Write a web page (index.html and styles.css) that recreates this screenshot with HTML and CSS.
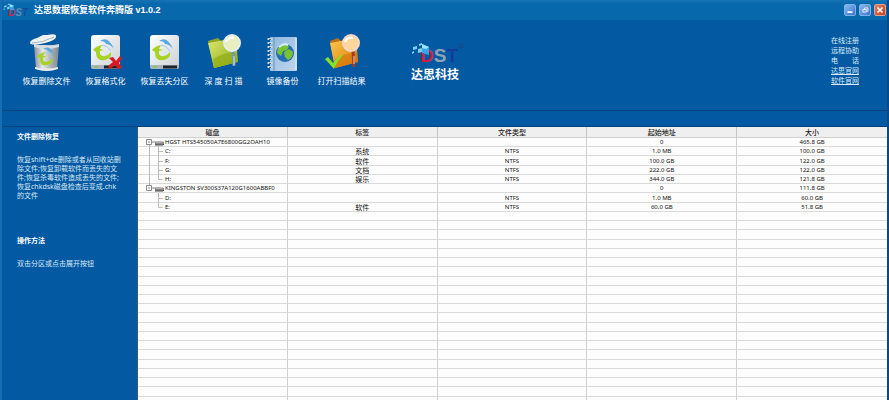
FILE: index.html
```
<!DOCTYPE html>
<html lang="zh-CN">
<head>
<meta charset="utf-8">
<title>达思数据恢复软件奔腾版 v1.0.2</title>
<link rel="stylesheet" href="styles.css">
</head>
<body>
<svg class="defs" aria-hidden="true">
  <defs>
    <linearGradient id="paper" x2="1" y2="1"><stop stop-color="#fff"/><stop offset="1" stop-color="#c9d0d4"/></linearGradient>
    <linearGradient id="metal"><stop stop-color="#878f94"/><stop offset=".35" stop-color="#e4e8e8"/><stop offset=".7" stop-color="#a9b0b3"/><stop offset="1" stop-color="#7f898f"/></linearGradient>
    <linearGradient id="green" x2="1" y2="1"><stop stop-color="#dce870"/><stop offset="1" stop-color="#8fab17"/></linearGradient>
    <linearGradient id="orange" x2="1" y2="1"><stop stop-color="#ffc850"/><stop offset="1" stop-color="#d47b09"/></linearGradient>
    <linearGradient id="book" x2="1" y2="1"><stop stop-color="#8db9df"/><stop offset="1" stop-color="#c0d5ee"/></linearGradient>
    <g id="arrows">
      <path d="M12 7q8-6 14 8-4-5-8-5-1-3-6-3z" fill="#5aa8e0"/>
      <path d="M14 11q5 0 9 6" fill="none" stroke="#9accf0"/>
      <path d="M5 16q3-4 9-5l-2 4 4 1-4 1q-1 6 5 5 4-1 6-4 1 6-6 8-9 2-9-8z" fill="#a8d224"/>
    </g>
    <g id="disk">
      <rect x="3" y="1" width="29" height="34" rx="3" fill="url(#paper)"/>
      <path d="M3 31h29v2q0 2-3 2H6q-3 0-3-2z" fill="#aab4ba"/>
      <path d="M6 33h4" stroke="#7cc33c"/>
      <path d="M16 33h14" stroke="#1d252b" stroke-width="3"/>
      <use href="#arrows"/>
    </g>
    <g id="drive">
      <path d="M18 3h5l3 1v3h-9V4z" fill="#8a8a8a"/><path d="M18 4h6" stroke="#ddd"/><path d="M17 7h8l1-1" fill="none" stroke="#444"/>
    </g>
    <g id="dst">
      <path d="M2 3l4-1v3l-4 1zM1 8l2-1v2l-2 1zM7 5l4-1v4l-4 1zM8 0l3-1v2L8 2z" fill="#83cdf5"/>
      <path d="M11 0l7 3v8l-7-2z" fill="#36a5e8"/><path d="M11 0l7 3-3 2-4-1z" fill="#9be2ff"/>
    </g>
  </defs>
</svg>

<div class="window">
  <header class="titlebar">
    <svg class="mini-logo" viewBox="0 0 27 16" role="img" aria-label="DST">
      <text x="5" y="14" class="mark-text"><tspan fill="#c82848">D</tspan><tspan fill="#5d8cb4">S</tspan><tspan fill="#1849a0">T</tspan></text>
      <use href="#dst" transform="translate(0 2) scale(.6)"/>
    </svg>
    <h1>达思数据恢复软件奔腾版 v1.0.2</h1>
    <div class="controls">
      <button type="button" aria-label="最小化"><svg viewBox="0 0 12 12"><path d="M3 8.500h6" stroke="#fff" stroke-width="2"/></svg></button>
      <button type="button" aria-label="还原"><svg viewBox="0 0 12 12" fill="none" stroke="#fff"><path d="M5.500 5V3.500h4v4H8M3.500 5.500h4v3h-4z"/></svg></button>
      <button type="button" class="close" aria-label="关闭"><svg viewBox="0 0 12 12"><path d="M3 3l6 6M9 3l-6 6" stroke="#fff" stroke-width="2"/></svg></button>
    </div>
  </header>

  <div class="toolbar">
    <nav class="tools">
      <button type="button">
        <svg viewBox="0 0 36 38">
          <path d="M5 11h25l-2 24q-10 3-21 0z" fill="url(#metal)"/>
          <path d="M5 10q12 3 25 0v3q-12 4-25 0z" fill="#d5dbde"/>
          <path d="M6 33q11 3 23 0v2q-11 4-23 0z" fill="#e9ecec"/>
          <path d="M1 9Q1 6 8 4L14 1l4 0q9-2 9 1 1 4-11 7Q2 12 1 9z" fill="#eef1f2"/>
          <path d="M3 9q10 0 22-6" fill="none" stroke="#a9b2b8"/>
          <use href="#arrows" transform="translate(4 9) scale(.85)"/>
        </svg>
        <span>恢复删除文件</span>
      </button>
      <button type="button">
        <svg viewBox="0 0 36 38"><use href="#disk"/><path d="M21 24l4-1 3 4 4-5 2 2-3 5 3 5-4 1-3-4-5 4-2-3 5-4z" fill="#da1820"/></svg>
        <span>恢复格式化</span>
      </button>
      <button type="button">
        <svg viewBox="0 0 36 38"><use href="#disk"/></svg>
        <span>恢复丢失分区</span>
      </button>
      <button type="button">
        <svg viewBox="0 0 36 38">
          <path d="M2 7l10-3 3 3 13-3 3 24L8 34z" fill="#91a620"/>
          <path d="M2 9l28-5 2 24L8 34z" fill="url(#green)"/><path d="M7 25q14-8 23-6l1 9L8 34z" fill="#92ac16" opacity=".7"/>
          <path d="M27 16l1 16" stroke="#7097b4" stroke-width="3"/><path d="M28 22v9" stroke="#dceaf3"/>
          <circle cx="26" cy="9" r="8" fill="#e9eec0" stroke="#e5eef0" stroke-width="2"/><path d="M20 8q2-5 8-4" fill="none" stroke="#fff" stroke-width="2"/>
        </svg>
        <span>深 度 扫 描</span>
      </button>
      <button type="button">
        <svg viewBox="0 0 36 38">
          <rect x="5" y="3" width="27" height="34" rx="1" fill="url(#book)"/><path d="M9 3v34" stroke="#6c91b5"/><path d="M31 4v32" stroke="#e1eefa"/>
          <path d="M5 4v32" stroke="#ccd5dc" stroke-width="5" stroke-dasharray="2 2"/><path d="M5 5v30" stroke="#536c80" stroke-width="2" stroke-dasharray="1 3"/>
          <circle cx="20" cy="19" r="9" fill="#266db4"/><path d="M13 14q5-6 11-2l-2 4-4 1-2 5-4-3zM19 18l5-3 4 3q0 6-5 8l-3-3z" fill="#79c332"/><path d="M14 13q5-4 9-2" fill="none" stroke="#d7f1ff" stroke-width="2"/>
        </svg>
        <span>镜像备份</span>
      </button>
      <button type="button">
        <svg viewBox="0 0 36 38">
          <path d="M6 7l8-3 3 3 13-3 3 24L11 34z" fill="#bd7113"/>
          <path d="M6 9l26-5 2 24L11 34z" fill="url(#orange)"/><path d="M10 26q12-8 23-7l1 9-23 6z" fill="#d57a0b" opacity=".7"/>
          <path d="M29 17l1 16" stroke="#a5392a" stroke-width="3"/><path d="M30 22v8" stroke="#ffd1bc"/>
          <circle cx="27" cy="9" r="8" fill="#ffd69a" stroke="#f5d8c9" stroke-width="2"/><path d="M21 8q2-5 8-4" fill="none" stroke="#fff" stroke-width="2"/>
          <path d="M1 25l3-2 5 6Q13 23 20 20q-7 7-10 15z" fill="#84e326"/>
        </svg>
        <span>打开扫描结果</span>
      </button>
    </nav>
    <div class="brand">
      <svg viewBox="0 0 54 24" role="img" aria-label="DST">
        <text x="9" y="20" class="brand-text"><tspan fill="#d41c40">D</tspan><tspan fill="#8da4b7">S</tspan><tspan fill="#153b9c">T</tspan></text>
        <use href="#dst" y="2"/>
        <circle cx="50" cy="4" r="2" fill="none" stroke="#17477d"/>
      </svg>
      <strong>达思科技</strong>
    </div>
    <nav class="links">
      <a href="#register">在线注册</a>
      <a href="#remote">远程协助</a>
      <a href="#phone" class="spread"><span>电</span><span>话</span></a>
      <a href="#site" class="underlined">达思官网</a>
      <a href="#software" class="underlined">软件官网</a>
    </nav>
  </div>
  <div class="strip"></div>

  <main>
    <aside>
      <h2>文件删除恢复</h2>
      <p>恢复shift+de删除或者从回收站删<br>除文件;恢复卸载软件而丢失的文<br>件;恢复杀毒软件造成丢失的文件;<br>恢复chkdsk磁盘检查后变成.chk<br>的文件</p>
      <h2>操作方法</h2>
      <p>双击分区或点击展开按钮</p>
    </aside>
    <div class="listing">
      <table>
        <thead><tr><th>磁盘</th><th>标签</th><th>文件类型</th><th>起始地址</th><th>大小</th></tr></thead>
        <tbody>
          <tr><td><div class="node"><svg viewBox="0 0 27 8"><path d="M11.500 7v3" stroke="#aaa"/><path d="M8.500 1.500h5v5h-5zM10 4h2M14 4h3" fill="none" stroke="#888"/><use href="#drive"/></svg>HGST HTS545050A7E6800GG2OAH10</div></td><td></td><td></td><td>0</td><td>465.8 GB</td></tr>
          <tr><td><div class="node"><svg viewBox="0 0 27 8"><path d="M11.500-1v11M20.500-1v11M21 4.500h4" fill="none" stroke="#bbb"/></svg>C:</div></td><td>系统</td><td>NTFS</td><td>1.0 MB</td><td>100.0 GB</td></tr>
          <tr><td><div class="node"><svg viewBox="0 0 27 8"><path d="M11.500-1v11M20.500-1v11M21 4.500h4" fill="none" stroke="#bbb"/></svg>F:</div></td><td>软件</td><td>NTFS</td><td>100.0 GB</td><td>122.0 GB</td></tr>
          <tr><td><div class="node"><svg viewBox="0 0 27 8"><path d="M11.500-1v11M20.500-1v11M21 4.500h4" fill="none" stroke="#bbb"/></svg>G:</div></td><td>文档</td><td>NTFS</td><td>222.0 GB</td><td>122.0 GB</td></tr>
          <tr><td><div class="node"><svg viewBox="0 0 27 8"><path d="M11.500-1v11M20.500-1v5.500h4" fill="none" stroke="#bbb"/></svg>H:</div></td><td>娱乐</td><td>NTFS</td><td>344.0 GB</td><td>121.8 GB</td></tr>
          <tr><td><div class="node"><svg viewBox="0 0 27 8"><path d="M11.500-1v2" stroke="#aaa"/><path d="M8.500 1.500h5v5h-5zM10 4h2M14 4h3" fill="none" stroke="#888"/><use href="#drive"/></svg>KINGSTON SV300S37A120G1600ABBF0</div></td><td></td><td></td><td>0</td><td>111.8 GB</td></tr>
          <tr><td><div class="node"><svg viewBox="0 0 27 8"><path d="M20.500-1v11M21 4.500h4" fill="none" stroke="#bbb"/></svg>D:</div></td><td></td><td>NTFS</td><td>1.0 MB</td><td>60.0 GB</td></tr>
          <tr><td><div class="node"><svg viewBox="0 0 27 8"><path d="M20.500-1v5.500h4" fill="none" stroke="#bbb"/></svg>E:</div></td><td>软件</td><td>NTFS</td><td>60.0 GB</td><td>51.8 GB</td></tr>
          <tr><td></td><td></td><td></td><td></td><td></td></tr>
          <tr><td></td><td></td><td></td><td></td><td></td></tr>
          <tr><td></td><td></td><td></td><td></td><td></td></tr>
          <tr><td></td><td></td><td></td><td></td><td></td></tr>
          <tr><td></td><td></td><td></td><td></td><td></td></tr>
          <tr><td></td><td></td><td></td><td></td><td></td></tr>
          <tr><td></td><td></td><td></td><td></td><td></td></tr>
          <tr><td></td><td></td><td></td><td></td><td></td></tr>
          <tr><td></td><td></td><td></td><td></td><td></td></tr>
          <tr><td></td><td></td><td></td><td></td><td></td></tr>
          <tr><td></td><td></td><td></td><td></td><td></td></tr>
          <tr><td></td><td></td><td></td><td></td><td></td></tr>
          <tr><td></td><td></td><td></td><td></td><td></td></tr>
          <tr><td></td><td></td><td></td><td></td><td></td></tr>
          <tr><td></td><td></td><td></td><td></td><td></td></tr>
          <tr><td></td><td></td><td></td><td></td><td></td></tr>
          <tr><td></td><td></td><td></td><td></td><td></td></tr>
          <tr><td></td><td></td><td></td><td></td><td></td></tr>
          <tr><td></td><td></td><td></td><td></td><td></td></tr>
          <tr><td></td><td></td><td></td><td></td><td></td></tr>
          <tr><td></td><td></td><td></td><td></td><td></td></tr>
        </tbody>
      </table>
    </div>
  </main>
</div>
</body>
</html>
```
FILE: styles.css
```
* { box-sizing: border-box; }
body { margin: 0; background: #035aa3; color: #fff; font: 7px/9px "Noto Sans", "Noto Sans CJK SC", sans-serif; }
h1, h2, p { margin: 0; }
button { border: 0; padding: 0; background: none; color: inherit; font: inherit; }
svg { display: block; overflow: visible; }
.defs { position: absolute; width: 0; height: 0; }
.window { height: 100vh; overflow: hidden; display: flex; flex-direction: column; border-left: 2px solid #166fb2; border-right: 2px solid #07498a; }

.titlebar { height: 20px; flex: none; display: flex; align-items: center; gap: 4px; padding: 0 1px; background: linear-gradient(#1673b4, #0868ac 4px, #0868ac); }
.mini-logo { width: 27px; height: 16px; }
.mark-text { font: italic bold 10px "Liberation Sans", sans-serif; }
h1 { font: 700 9px/12px "Liberation Sans", "Noto Sans CJK SC", sans-serif; }
.controls { margin-left: auto; display: flex; gap: 3px; }
.controls button { width: 12px; height: 12px; border: 1px solid #7fb0e8; border-radius: 2px; background: linear-gradient(135deg, #8db8ef, #3a74cc); }
.controls .close { border-color: #e0a090; background: linear-gradient(135deg, #e08468, #c13a20); }
.controls svg { width: 10px; height: 10px; }

.toolbar { height: 90px; flex: none; display: flex; align-items: flex-start; padding: 14px 26px 0 15px; }
.tools { display: flex; }
.tools button { width: 59px; display: flex; flex-direction: column; align-items: center; gap: 3px; font-size: 8px; line-height: 12px; white-space: nowrap; }
.tools svg { width: 36px; height: 38px; }
.brand { margin-left: 40px; margin-top: 8px; display: flex; flex-direction: column; }
.brand svg { width: 54px; height: 24px; }
.brand-text { font: bold 19px "Liberation Sans", sans-serif; }
.brand strong { font-size: 12px; line-height: 18px; }
.links { margin-left: auto; width: 30px; display: flex; flex-direction: column; gap: 1px; padding-top: 2px; }
.links a { color: #dbeaf7; text-decoration: none; line-height: 9px; }
.links .underlined { text-decoration: underline; }
.links .spread { display: flex; justify-content: space-between; padding-right: 2px; }
.strip { height: 17px; flex: none; border-top: 1px solid #053f7c; border-bottom: 1px solid #053f7c; }

main { flex: 1; min-height: 0; display: grid; grid-template-columns: 135px 1fr; }
aside { padding: 4px 8px 0 15px; white-space: nowrap; }
h2 { font-size: 7px; line-height: 12px; font-weight: 700; }
aside p { margin: 12px 0 35px; color: #d9e8f5; }
.listing { min-height: 0; overflow: hidden; background: #fdfdfd; border-left: 1px solid #4a5560; color: #222; }
table { width: 100%; table-layout: fixed; border-collapse: separate; border-spacing: 0; text-align: center; height: 279px; }
th { height: 11px; padding: 0; background: #efefef; border-right: 1px solid #c4c4c4; border-bottom: 1px solid #d0d0d0; font-weight: 500; line-height: 9px; }
tbody { height: 268px; }
td { height: 9px; padding: 0; border-right: 1px solid #d0d0d0; border-bottom: 1px solid #dadada; line-height: 8px; font-size: 6px; color: #111; }
td:nth-child(2) { font-family: "Noto Sans CJK SC", sans-serif; font-size: 7px; }
th:last-child, td:last-child { border-right: 0; }
.node { display: flex; align-items: center; height: 8px; white-space: nowrap; }
.node svg { width: 27px; height: 8px; flex: none; }
```
